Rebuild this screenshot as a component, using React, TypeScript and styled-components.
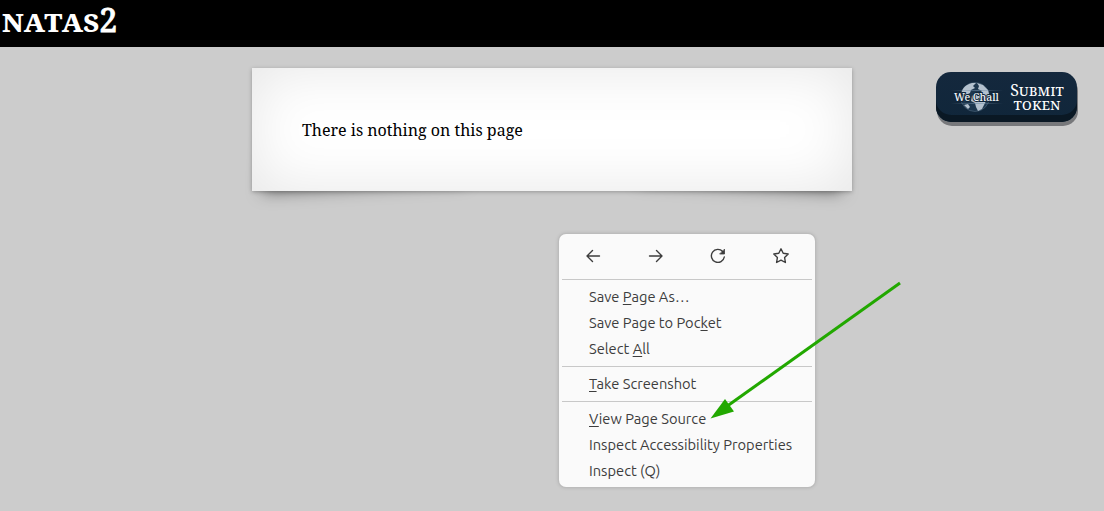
import React from "react";
import styled, { createGlobalStyle } from "styled-components";

const Global = createGlobalStyle`
  * { box-sizing: border-box; }
  body { margin: 0; background: #ccc; color: #000; font-family: "Noto Serif", "DejaVu Serif", serif; }
`;

const Page = styled.div`
  position: relative;
  height: 511px;
  overflow: hidden;
  isolation: isolate;
`;

const Header = styled.h1`
  margin: 0;
  height: 47px;
  padding-left: 2px;
  background: #000;
  color: #fff;
  font-size: 32px;
  line-height: 40px;
  font-weight: bold;
  font-variant: small-caps;
  white-space: nowrap;
`;

const Level = styled.span`
  font-weight: 500;
  -webkit-text-stroke: 0.8px #fff;
`;

const Paper = styled.main`
  position: relative;
  width: 600px;
  height: 123px;
  margin: 21px auto 0;
  padding: 51px 50px 49px;
  background: #fff;
  box-shadow: 0 1px 4px rgba(0, 0, 0, 0.27), 0 0 60px rgba(0, 0, 0, 0.1) inset;
  font-size: 16px;
  line-height: 23px;
  white-space: nowrap;

  &::before, &::after {
    content: "";
    position: absolute;
    z-index: -1;
    bottom: 12px;
    left: 15px;
    width: 50%;
    height: 55%;
    max-width: 200px;
    box-shadow: 0 8px 16px rgba(0, 0, 0, 0.5);
    transform: skew(-8deg) rotate(-3deg);
  }
  &::after {
    left: auto;
    right: 15px;
    transform: skew(8deg) rotate(3deg);
  }
`;

const TokenButton = styled.button`
  position: absolute;
  left: 936px;
  top: 72px;
  width: 141px;
  height: 50px;
  border: 0;
  padding: 0 12px 0 15px;
  border-radius: 15px;
  background: linear-gradient(#14283d, #10263a);
  box-shadow: inset 0 -7px 0 #0a1824, 1px 4px 0 #77787b;
  color: #fff;
  display: flex;
  align-items: center;
  justify-content: space-between;
`;

const TokenLabel = styled.span`
  width: 56px;
  font: 16px/14px "Noto Serif", "Liberation Serif", serif;
  font-variant: small-caps;
  text-align: center;
  white-space: nowrap;
`;

const Menu = styled.nav`
  position: absolute;
  left: 559px;
  top: 234px;
  width: 256px;
  height: 253px;
  padding: 0 3px;
  border-radius: 7px;
  background: #fafafa;
  box-shadow: 0 0 0 1px #bcbcbc, 0 0 4px rgba(0, 0, 0, 0.2);
  color: #3d3d3d;
  font: 14.667px/26px "Ubuntu", "Noto Sans", sans-serif;
`;

const Tools = styled.div`
  height: 45px;
  padding-bottom: 2px;
  display: flex;
  justify-content: space-around;
  align-items: center;
  svg { display: block; }
`;

const Group = styled.div`
  border-top: 1px solid #c8c8c8;
  padding: 4px 0 4px 27px;
`;

const Item = styled.div`
  height: 26px;
  white-space: nowrap;
  u { text-underline-offset: 2px; text-decoration-thickness: 1px; text-decoration-skip-ink: none; }
`;

const Arrow = styled.svg`
  position: absolute;
  left: 0;
  top: 0;
  pointer-events: none;
`;

const Icon = ({ children }: { children: React.ReactNode }) => (
  <svg width="16" height="16" viewBox="0 0 16 16" fill="none" stroke="#3d3d3d" strokeWidth="1.4" strokeLinecap="round" strokeLinejoin="round">
    {children}
  </svg>
);

const Globe = () => (
  <svg width="52" height="38" viewBox="0 0 52 38">
    <defs>
      <linearGradient id="streak">
        <stop offset="0" stopColor="#6f8ba5" stopOpacity="0" />
        <stop offset=".5" stopColor="#6f8ba5" stopOpacity=".6" />
        <stop offset="1" stopColor="#6f8ba5" stopOpacity="0" />
      </linearGradient>
    </defs>
    <circle cx="24" cy="19" r="14.5" fill="#1e374e" stroke="#587087" strokeWidth=".5" />
    <path d="M11 13C13 8 17 6 21 5L25 5 22 8 24 10 20 12 19 15 15 17 12 20 10 22ZM26 5L32 7 37 12 38.500 18 37 24 35 23 33 27 31 31 27 33 25 29 24 25 20 23 21 18 24 16 28 16 31 13 27 11 28 8ZM13 27L17 26 19 29 17 31Z" fill="#b4c1ce" />
    <rect y="12" width="52" height="1" fill="url(#streak)" />
    <rect y="25" width="52" height="1" fill="url(#streak)" />
    <text x="3" y="23" textLength="45" lengthAdjust="spacingAndGlyphs" fill="#f2f5f8" stroke="#10263a" strokeWidth="2" paintOrder="stroke" fontSize="11" fontFamily="Noto Serif, Liberation Serif, serif" fontWeight="500">We Chall</text>
  </svg>
);

export default function App() {
  return (
    <Page>
      <Global />
      <Header>natas<Level>2</Level></Header>
      <Paper>There is nothing on this page</Paper>
      <TokenButton>
        <Globe />
        <TokenLabel>Submit<br />token</TokenLabel>
      </TokenButton>
      <Menu>
        <Tools>
          <Icon><path d="M14.500 8H2M7.500 2.500 2 8l5.500 5.500" /></Icon>
          <Icon><path d="M1.500 8H14M8.500 2.500 14 8l-5.500 5.500" /></Icon>
          <Icon><path d="M14.300 9A6.500 6.500 0 1 1 12.700 3.500" /><path d="M14.500 1.500V6H10z" fill="#3d3d3d" strokeWidth=".8" /></Icon>
          <Icon><path d="m8 .8 2.200 4.500 5 .7-3.600 3.500.8 5L8 12.200l-4.400 2.300.8-5L.8 6l5-.7z" /></Icon>
        </Tools>
        <Group>
          <Item>Save <u>P</u>age As…</Item>
          <Item>Save Page to Poc<u>k</u>et</Item>
          <Item>Select <u>A</u>ll</Item>
        </Group>
        <Group><Item><u>T</u>ake Screenshot</Item></Group>
        <Group>
          <Item><u>V</u>iew Page Source</Item>
          <Item>Inspect Accessibility Properties</Item>
          <Item>Inspect (Q)</Item>
        </Group>
      </Menu>
      <Arrow width="1104" height="511" viewBox="0 0 1104 511">
        <path d="M900 283 728 405.500" stroke="#22a800" strokeWidth="3" />
        <path d="M710.500 418.500 725 399l9 12.500z" fill="#22a800" />
      </Arrow>
    </Page>
  );
}
